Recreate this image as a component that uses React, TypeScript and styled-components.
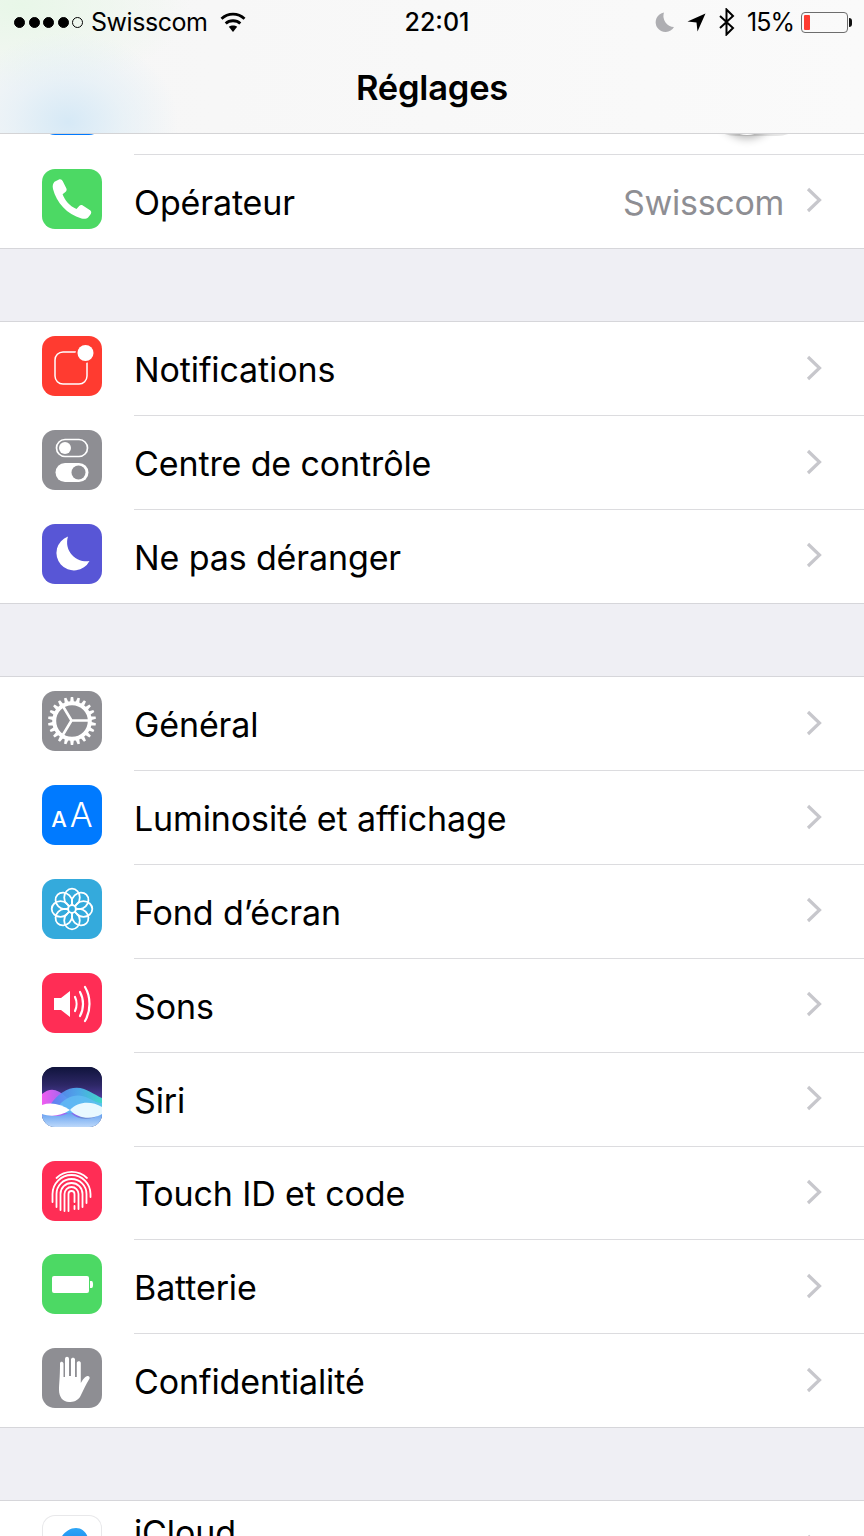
import styled, { createGlobalStyle } from "styled-components";
import type { ReactNode } from "react";

const GlobalStyle = createGlobalStyle`
  html, body {
    margin: 0;
    padding: 0;
    background: #efeff4;
  }
  #root {
    width: 864px;
    height: 1536px;
    overflow: hidden;
  }
`;

const Page = styled.div`
  width: 864px;
  height: 1536px;
  overflow: hidden;
  font-family: Inter, "Liberation Sans", sans-serif;
  color: #000;
  background: #efeff4;
`;

const NavBar = styled.header`
  height: 134px;
  box-sizing: border-box;
  border-bottom: 1px solid #d4d4d6;
  background:
    radial-gradient(ellipse 110px 90px at 68px 122px, #d6e9f6 0%, rgba(224, 238, 247, 0.6) 50%, rgba(247, 247, 247, 0) 100%),
    radial-gradient(ellipse 170px 85px at 20px 5px, #e8f7e8 0%, rgba(247, 247, 247, 0) 100%),
    linear-gradient(90deg, #f6f6f6, #fafafa);
`;

const StatusBar = styled.div`
  display: grid;
  grid-template-columns: 1fr auto 1fr;
  align-items: center;
  height: 44px;
  padding: 0 12px 0 14px;
  font-size: 25px;
`;

const StatusLeft = styled.div`
  display: flex;
  align-items: center;
`;

const StatusRight = styled.div`
  display: flex;
  align-items: center;
  justify-content: flex-end;
`;

const Dots = styled.div`
  display: flex;
  gap: 3.5px;
  margin-right: 8px;
`;

const Dot = styled.span<{ $filled: boolean }>`
  width: 11px;
  height: 11px;
  box-sizing: border-box;
  border-radius: 50%;
  background: ${({ $filled }) => ($filled ? "#000" : "transparent")};
  border: 1px solid #000;
`;

const Carrier = styled.span`
  letter-spacing: -0.45px;
`;

const Time = styled.span`
  font-weight: 500;
  padding-left: 8px;
`;

const StatusIcon = styled.svg<{ $left: number }>`
  display: block;
  margin-left: ${({ $left }) => $left}px;
`;

const Percent = styled.span`
  margin-left: 11px;
  letter-spacing: -1px;
`;

const Battery = styled.div`
  display: flex;
  align-items: center;
  margin-left: 7px;
`;

const BatteryShell = styled.div`
  width: 47px;
  height: 21px;
  box-sizing: border-box;
  padding: 2px;
  border: 1px solid #6d6d6d;
  border-radius: 4px;
  display: flex;
`;

const BatteryLevel = styled.div`
  width: 6px;
  background: #ff3b30;
  border-radius: 1px;
`;

const BatteryNub = styled.div`
  width: 3px;
  height: 9px;
  margin-left: 1px;
  border-radius: 0 3px 3px 0;
  background: #111;
`;

const Title = styled.h1`
  margin: 0;
  height: 88px;
  display: flex;
  justify-content: center;
  align-items: center;
  font-size: 34.5px;
  font-weight: 600;
  letter-spacing: -0.2px;
  position: relative;
  top: -1px;
`;

const Section = styled.section`
  background: #fff;
`;

const Gap = styled.div`
  height: 73.4px;
  box-sizing: border-box;
  border-bottom: 1px solid #d6d6da;
`;

const RowWrap = styled.div<{ $last?: boolean }>`
  display: flex;
  height: 93.86px;
  box-sizing: border-box;
  padding-left: 42px;
  border-bottom: ${({ $last }) => ($last ? "1px solid #d6d6da" : "none")};
`;

const Tile = styled.div<{ $bg: string; $outlined?: boolean }>`
  flex: none;
  width: 60px;
  height: 60px;
  margin-top: 14px;
  border-radius: 13px;
  overflow: hidden;
  background: ${({ $bg }) => $bg};
  box-shadow: ${({ $outlined }) => ($outlined ? "inset 0 0 0 1px #e8e8ea" : "none")};
`;

const TileArt = styled.svg`
  display: block;
  width: 60px;
  height: 60px;
`;

const RowBody = styled.div<{ $last?: boolean }>`
  flex: 1;
  display: flex;
  align-items: center;
  margin-left: 32px;
  padding: 0 41px 0 0;
  border-bottom: ${({ $last }) => ($last ? "none" : "1px solid #dcdcdf")};
`;

const Label = styled.span<{ $raised?: boolean }>`
  flex: 1;
  font-size: 34px;
  letter-spacing: -0.12px;
  margin-bottom: ${({ $raised }) => ($raised ? "32px" : "0")};
  position: relative;
  top: 1px;
`;

const Value = styled.span`
  font-size: 34px;
  letter-spacing: -0.3px;
  color: #8e8e93;
  margin-right: 21px;
  position: relative;
  top: 1px;
`;

const Chevron = styled.svg`
  flex: none;
  width: 18px;
  height: 28px;
  position: relative;
  top: -1px;
`;

const ClippedRow = styled.div`
  display: flex;
  height: 21px;
  padding-left: 42px;
  background: #fff;
  overflow: hidden;
`;

const ClippedTile = styled.div`
  flex: none;
  width: 60px;
  height: 60px;
  margin-top: -59px;
  border-radius: 13px;
  background: #007aff;
`;

const ClippedBody = styled.div`
  flex: 1;
  margin-left: 32px;
  padding-right: 56px;
  display: flex;
  justify-content: flex-end;
  border-bottom: 1px solid #dcdcdf;
`;

const Toggle = styled.div`
  width: 103px;
  height: 62px;
  margin-top: -60px;
  box-sizing: border-box;
  border: 2px solid #e6e6e6;
  border-radius: 31px;
  background: #fff;
  display: flex;
`;

const ToggleKnob = styled.div`
  flex: none;
  width: 58px;
  height: 58px;
  margin: 1px 0 0 11px;
  border-radius: 50%;
  background: #fff;
  box-shadow: 0 3px 10px rgba(0, 0, 0, 0.32);
`;

const AaTile = styled(Tile)`
  display: flex;
  justify-content: center;
  align-items: baseline;
  color: #fff;
  line-height: 60px;
`;

const SmallA = styled.span`
  font-size: 22px;
  font-weight: 500;
  margin-right: 3px;
`;

const LargeA = styled.span`
  font-size: 34px;
  font-weight: 300;
`;

const Gear = () => (
  <TileArt viewBox="0 0 60 60">
    {Array.from({ length: 22 }, (_, i) => (
      <path key={i} d="M27.800 13H32.200L31.200 6H28.800Z" fill="#fff" transform={`rotate(${(i * 360) / 22} 30 30)`} />
    ))}
    <circle cx="30" cy="30" r="17.800" fill="none" stroke="#fff" strokeWidth="4" />
    <path d="M29.500 29.500H47M29.500 29.500L20.500 14.500M29.500 29.500L20.500 44.500" stroke="#fff" strokeWidth="2.600" fill="none" />
  </TileArt>
);

const Flower = () => (
  <TileArt viewBox="0 0 60 60">
    {Array.from({ length: 8 }, (_, i) => (
      <ellipse
        key={i}
        cx="30"
        cy="18.500"
        rx="7.800"
        ry="8.800"
        fill="none"
        stroke="#fff"
        strokeWidth="1.800"
        transform={`rotate(${i * 45} 30 30)`}
      />
    ))}
    <circle cx="30" cy="30" r="3.800" fill="#34aadc" stroke="#fff" strokeWidth="1.800" />
  </TileArt>
);

const Siri = () => (
  <TileArt viewBox="0 0 60 60">
    <defs>
      <linearGradient id="siriBg" x1="0" y1="0" x2="0" y2="1">
        <stop offset="0" stopColor="#10143c" />
        <stop offset="0.3" stopColor="#2d2766" />
        <stop offset="0.5" stopColor="#4b3a96" />
        <stop offset="1" stopColor="#7fb0f0" />
      </linearGradient>
      <linearGradient id="siriPink" x1="0" y1="0" x2="1" y2="0">
        <stop offset="0" stopColor="#f05cf0" />
        <stop offset="0.45" stopColor="#8f6af0" />
        <stop offset="1" stopColor="#4a80e0" />
      </linearGradient>
      <linearGradient id="siriBlue" x1="0" y1="0" x2="1" y2="0">
        <stop offset="0" stopColor="#5a7cf0" />
        <stop offset="0.55" stopColor="#4fb4f4" />
        <stop offset="1" stopColor="#3fe6cc" />
      </linearGradient>
      <linearGradient id="siriLow" x1="0" y1="0" x2="0" y2="1">
        <stop offset="0" stopColor="#5f9ef0" />
        <stop offset="1" stopColor="#bcd8fa" />
      </linearGradient>
      <filter id="siriSoft">
        <feGaussianBlur stdDeviation="0.700" />
      </filter>
    </defs>
    <rect width="60" height="60" fill="url(#siriBg)" />
    <g filter="url(#siriSoft)">
      <path d="M0 27C8 20 16 22 24 30C30 36 40 40 60 40V50H0Z" fill="url(#siriPink)" />
      <path d="M8 38C18 24 30 18 42 22C50 25 55 29 60 31V46H8Z" fill="url(#siriBlue)" opacity="0.9" />
      <path d="M14 42C24 28 36 26 46 31C52 34 56 36 60 36V46H14Z" fill="#62bdf4" opacity="0.8" />
    </g>
    <path d="M0 46C10 50 20 50 28 45C36 54 50 54 60 46V60H0Z" fill="url(#siriLow)" />
    <path d="M0 38C9 35 19 37 28 43C19 49 9 50 0 47Z" fill="#fff" />
    <path d="M28 43C36 34 50 34 60 40V47C50 53 36 52 28 43Z" fill="#e9f9ff" />
  </TileArt>
);

const Fingerprint = () => (
  <TileArt viewBox="0 0 60 60">
    <g fill="none" stroke="#fff" strokeWidth="1.800" strokeLinecap="round">
      <path d="M14.500 17A22 22 0 0 1 45 17" />
      <path d="M10.500 41V33A19 19 0 0 1 48.500 33V36" />
      <path d="M14.500 46V33A15 15 0 0 1 44.500 33V42" />
      <path d="M18.500 49V33A11 11 0 0 1 40.500 33V46" />
      <path d="M22.500 50V33A7 7 0 0 1 36.500 33V48" />
      <path d="M26.500 50V33A3 3 0 0 1 32.500 33V41M32.500 45V48" />
    </g>
  </TileArt>
);

const Hand = () => (
  <TileArt viewBox="0 0 60 60">
    <path
      fill="#fff"
      d="M18 15.500C18 13 21 13 21.500 15.500V29H23V11C23 8 27 8 27 11V28H29V11.500C29 9 33 9 33 11.500V29H34.800V15C34.800 12.500 38.800 12.500 38.800 15V35C40.500 32 43.500 27.500 46 28C48 28.500 48 30 47 31.500C44 36 41.500 42 38.500 48C36 53 31 54 27 54C21 54 17 49 17 42C17 36 18 30 18 15.500Z"
    />
  </TileArt>
);

type RowData = {
  label: string;
  value?: string;
  last?: boolean;
  raised?: boolean;
  icon: ReactNode;
};

const firstGroup: RowData[] = [
  {
    label: "Opérateur",
    value: "Swisscom",
    last: true,
    icon: (
      <Tile $bg="#4cd964">
        <TileArt viewBox="0 0 60 60">
          <path
            fill="#fff"
            d="M12.500 12.800L17 10.500C18.800 10 20 10.800 20.800 12.300L24.300 19.300C25 20.700 24.600 22 23.400 23L20.600 25.300C22.800 31.600 28 37.300 34.500 40.100L37.200 37C38.200 35.900 39.500 35.700 40.800 36.500L47.700 41C49.200 42 49.700 43.300 48.800 45L46.300 48.200C44.800 49.800 42.300 50.200 39.500 49.400C25 45.500 14.500 33.500 11 20C10.300 17 10.900 14.400 12.500 12.800Z"
          />
        </TileArt>
      </Tile>
    ),
  },
];

const secondGroup: RowData[] = [
  {
    label: "Notifications",
    icon: (
      <Tile $bg="#ff3b30">
        <TileArt viewBox="0 0 60 60">
          <rect x="13" y="16" width="32" height="32" rx="8" fill="none" stroke="#fff" strokeWidth="1.500" />
          <circle cx="43.500" cy="17" r="10" fill="#ff3b30" />
          <circle cx="43.500" cy="17" r="8" fill="#fff" />
        </TileArt>
      </Tile>
    ),
  },
  {
    label: "Centre de contrôle",
    icon: (
      <Tile $bg="#8e8e93">
        <TileArt viewBox="0 0 60 60">
          <rect x="14.500" y="9.500" width="31" height="17" rx="8.500" fill="none" stroke="#fff" strokeWidth="1.700" />
          <circle cx="23" cy="18" r="6" fill="#fff" />
          <rect x="13.500" y="33" width="33" height="19" rx="9.500" fill="#fff" />
          <circle cx="36.500" cy="42.500" r="7" fill="#8e8e93" />
        </TileArt>
      </Tile>
    ),
  },
  {
    label: "Ne pas déranger",
    icon: (
      <Tile $bg="#5856d6">
        <TileArt viewBox="0 0 60 60">
          <path fill="#fff" d="M26 12.500A17.500 17.500 0 1 0 47.500 37A19 19 0 0 1 26 12.500Z" />
        </TileArt>
      </Tile>
    ),
  },
];

const thirdGroup: RowData[] = [
  {
    label: "Général",
    icon: (
      <Tile $bg="#8e8e93">
        <Gear />
      </Tile>
    ),
  },
  {
    label: "Luminosité et affichage",
    icon: (
      <AaTile $bg="#007aff">
        <SmallA>A</SmallA>
        <LargeA>A</LargeA>
      </AaTile>
    ),
  },
  {
    label: "Fond d’écran",
    icon: (
      <Tile $bg="#34aadc">
        <Flower />
      </Tile>
    ),
  },
  {
    label: "Sons",
    icon: (
      <Tile $bg="#ff2d55">
        <TileArt viewBox="0 0 60 60">
          <path fill="#fff" d="M12 25H19L28 18V44L19 37H12Z" />
          <g fill="none" stroke="#fff" strokeWidth="2.200" strokeLinecap="round">
            <path d="M33 24C35 28 35 34 33 38" />
            <path d="M38 19C42 26 42 36 38 43" />
            <path d="M43 14C49 24 49 38 43 48" />
          </g>
        </TileArt>
      </Tile>
    ),
  },
  {
    label: "Siri",
    icon: (
      <Tile $bg="#10143c">
        <Siri />
      </Tile>
    ),
  },
  {
    label: "Touch ID et code",
    icon: (
      <Tile $bg="#ff2d55">
        <Fingerprint />
      </Tile>
    ),
  },
  {
    label: "Batterie",
    icon: (
      <Tile $bg="#4cd964">
        <TileArt viewBox="0 0 60 60">
          <rect x="10" y="22" width="37" height="17" rx="2" fill="#fff" />
          <path fill="#fff" d="M48 27H49.500C50.500 27 51 28 51 30.500S50.500 34 49.500 34H48Z" />
        </TileArt>
      </Tile>
    ),
  },
  {
    label: "Confidentialité",
    last: true,
    icon: (
      <Tile $bg="#8e8e93">
        <Hand />
      </Tile>
    ),
  },
];

const Row = ({ label, value, last, raised, icon }: RowData) => (
  <RowWrap $last={last}>
    {icon}
    <RowBody $last={last}>
      <Label $raised={raised}>{label}</Label>
      {value && <Value>{value}</Value>}
      <Chevron viewBox="0 0 18 28">
        <path d="M3 3L14.500 14L3 25" fill="none" stroke="#c7c7cc" strokeWidth="3.200" />
      </Chevron>
    </RowBody>
  </RowWrap>
);

export default function App() {
  return (
    <Page>
      <GlobalStyle />
      <NavBar>
        <StatusBar>
          <StatusLeft>
            <Dots>
              {[true, true, true, true, false].map((filled, i) => (
                <Dot key={i} $filled={filled} />
              ))}
            </Dots>
            <Carrier>Swisscom</Carrier>
            <StatusIcon $left={12} width="26" height="20" viewBox="0 0 26 20">
              <path d="M13 20L8.800 14.800C11 13 15 13 17.200 14.800Z" fill="#000" />
              <path d="M5.700 11.500C9.500 7.800 16.500 7.800 20.300 11.500" fill="none" stroke="#000" strokeWidth="2.800" />
              <path d="M1.500 6.800C8 .6 18 .6 24.500 6.800" fill="none" stroke="#000" strokeWidth="2.800" />
            </StatusIcon>
          </StatusLeft>
          <Time>22:01</Time>
          <StatusRight>
            <StatusIcon $left={0} width="20" height="20" viewBox="0 0 20 20">
              <path fill="#aeaeb2" d="M9 .5A9.800 9.800 0 1 0 19 15A11 11 0 0 1 9 .5Z" />
            </StatusIcon>
            <StatusIcon $left={12} width="19" height="19" viewBox="0 0 19 19">
              <path fill="#000" d="M18.500 .5L10.500 18.500L9.500 9.500L.5 8.500Z" />
            </StatusIcon>
            <StatusIcon $left={12} width="18" height="28" viewBox="0 0 18 28">
              <path d="M2 8L15 20L8.500 26.500V1.500L15 8L2 20" fill="none" stroke="#000" strokeWidth="2" />
            </StatusIcon>
            <Percent>15%</Percent>
            <Battery>
              <BatteryShell>
                <BatteryLevel />
              </BatteryShell>
              <BatteryNub />
            </Battery>
          </StatusRight>
        </StatusBar>
        <Title>Réglages</Title>
      </NavBar>
      <ClippedRow>
        <ClippedTile />
        <ClippedBody>
          <Toggle>
            <ToggleKnob />
          </Toggle>
        </ClippedBody>
      </ClippedRow>
      <Section>
        {firstGroup.map((row) => (
          <Row key={row.label} {...row} />
        ))}
      </Section>
      <Gap />
      <Section>
        {secondGroup.map((row, i) => (
          <Row key={row.label} {...row} last={i === secondGroup.length - 1} />
        ))}
      </Section>
      <Gap />
      <Section>
        {thirdGroup.map((row) => (
          <Row key={row.label} {...row} />
        ))}
      </Section>
      <Gap />
      <Section>
        <Row
          label="iCloud"
          raised
          icon={
            <Tile $bg="#fff" $outlined>
              <TileArt viewBox="0 0 60 60">
                <defs>
                  <linearGradient id="cloud" gradientUnits="userSpaceOnUse" x1="0" y1="13" x2="0" y2="44">
                    <stop offset="0" stopColor="#2ea6f6" />
                    <stop offset="1" stopColor="#0a70e8" />
                  </linearGradient>
                </defs>
                <path
                  fill="url(#cloud)"
                  d="M16 44C10 44 7 40 7.500 35C8 30.500 12 27.500 16.500 28C19 20 26 13 34 13C41 13 46 19 46.500 26C51 26.500 54 31 54 35.500C54 40.500 50.500 44 46 44Z"
                />
              </TileArt>
            </Tile>
          }
        />
      </Section>
    </Page>
  );
}
